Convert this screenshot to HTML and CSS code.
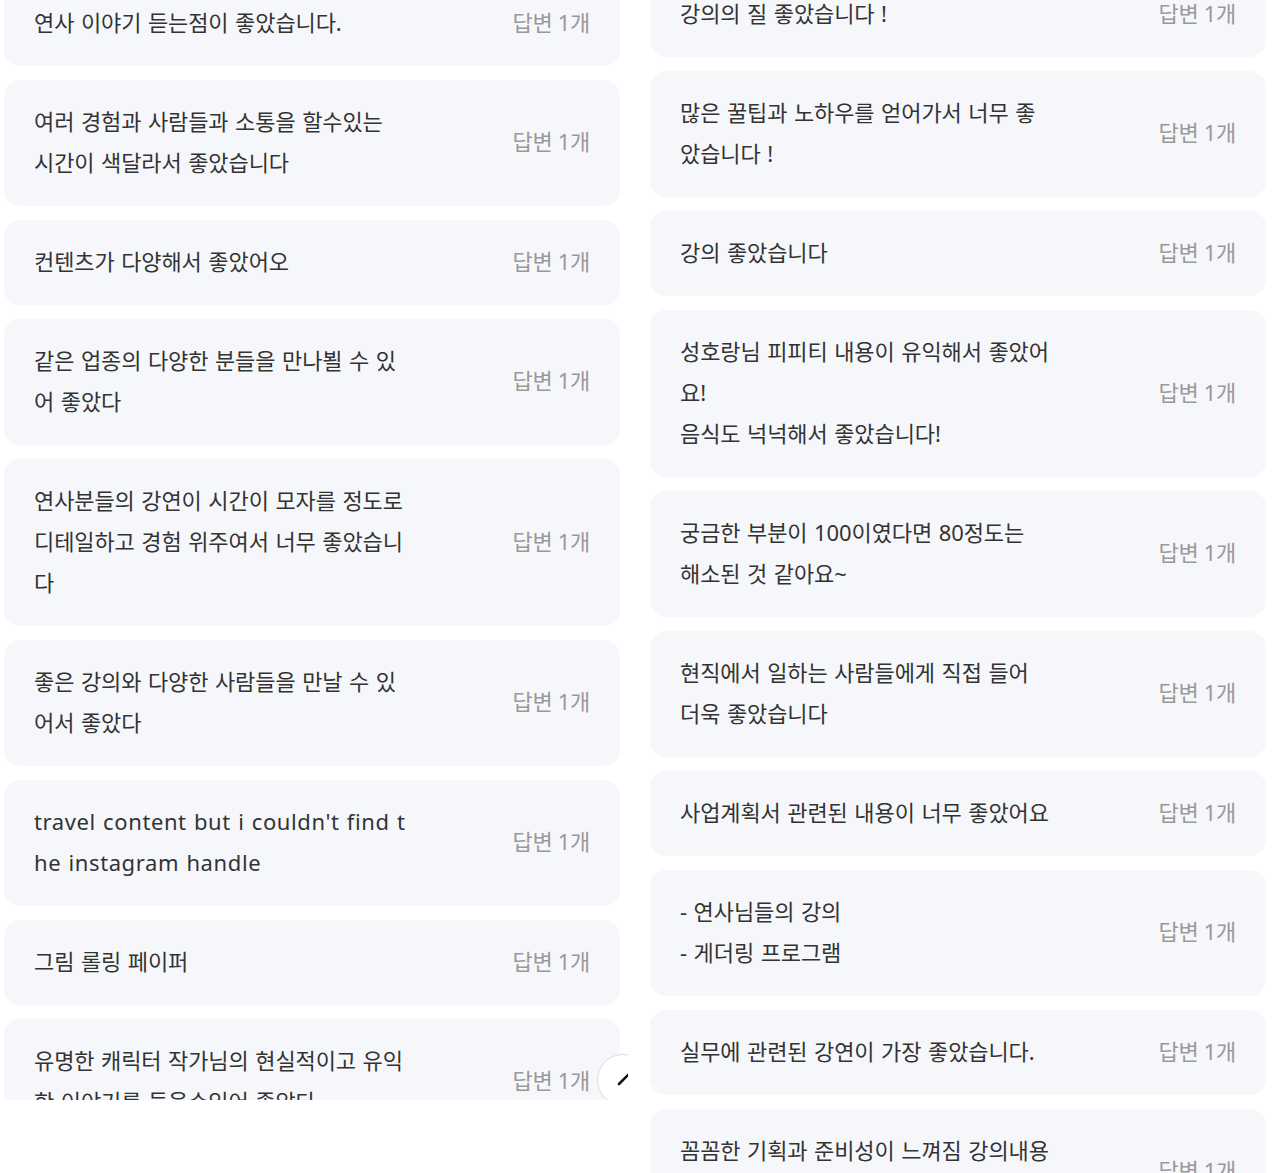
FILE: index.html
```html
<!DOCTYPE html>
<html lang="ko">
<head>
  <meta charset="UTF-8">
  <meta name="viewport" content="width=device-width, initial-scale=1.0">
  <title>답변 목록</title>
  <link rel="stylesheet" href="styles.css">
</head>
<body>
  <div class="panel panel-left">
    <ul class="answer-list">
      <li class="card"><p class="card-text">연사 이야기 듣는점이 좋았습니다.</p><span class="reply-count">답변 1개</span></li>
      <li class="card"><p class="card-text">여러 경험과 사람들과 소통을 할수있는<br>시간이 색달라서 좋았습니다</p><span class="reply-count">답변 1개</span></li>
      <li class="card"><p class="card-text">컨텐츠가 다양해서 좋았어오</p><span class="reply-count">답변 1개</span></li>
      <li class="card"><p class="card-text">같은 업종의 다양한 분들을 만나뵐 수 있<br>어 좋았다</p><span class="reply-count">답변 1개</span></li>
      <li class="card"><p class="card-text">연사분들의 강연이 시간이 모자를 정도로<br>디테일하고 경험 위주여서 너무 좋았습니<br>다</p><span class="reply-count">답변 1개</span></li>
      <li class="card"><p class="card-text">좋은 강의와 다양한 사람들을 만날 수 있<br>어서 좋았다</p><span class="reply-count">답변 1개</span></li>
      <li class="card"><p class="card-text latin">travel content but i couldn't find t<br>he instagram handle</p><span class="reply-count">답변 1개</span></li>
      <li class="card"><p class="card-text">그림 롤링 페이퍼</p><span class="reply-count">답변 1개</span></li>
      <li class="card"><p class="card-text">유명한 캐릭터 작가님의 현실적이고 유익<br>한 이야기를 들을수있어 좋았다</p><span class="reply-count">답변 1개</span></li>
    </ul>
    <button class="fab" type="button" aria-label="글쓰기">
      <svg width="52" height="52" viewBox="0 0 52 52">
        <line x1="22" y1="30" x2="34" y2="18" stroke="#111" stroke-width="2.6" stroke-linecap="round"/>
      </svg>
    </button>
  </div>

  <div class="panel panel-right">
    <ul class="answer-list">
      <li class="card"><p class="card-text">강의의 질 좋았습니다 !</p><span class="reply-count">답변 1개</span></li>
      <li class="card"><p class="card-text">많은 꿀팁과 노하우를 얻어가서 너무 좋<br>았습니다 !</p><span class="reply-count">답변 1개</span></li>
      <li class="card"><p class="card-text">강의 좋았습니다</p><span class="reply-count">답변 1개</span></li>
      <li class="card"><p class="card-text">성호랑님 피피티 내용이 유익해서 좋았어<br>요!<br>음식도 넉넉해서 좋았습니다!</p><span class="reply-count">답변 1개</span></li>
      <li class="card"><p class="card-text">궁금한 부분이 100이였다면 80정도는<br>해소된 것 같아요~</p><span class="reply-count">답변 1개</span></li>
      <li class="card"><p class="card-text">현직에서 일하는 사람들에게 직접 들어<br>더욱 좋았습니다</p><span class="reply-count">답변 1개</span></li>
      <li class="card"><p class="card-text">사업계획서 관련된 내용이 너무 좋았어요</p><span class="reply-count">답변 1개</span></li>
      <li class="card"><p class="card-text">- 연사님들의 강의<br>- 게더링 프로그램</p><span class="reply-count">답변 1개</span></li>
      <li class="card"><p class="card-text">실무에 관련된 강연이 가장 좋았습니다.</p><span class="reply-count">답변 1개</span></li>
      <li class="card"><p class="card-text">꼼꼼한 기획과 준비성이 느껴짐 강의내용<br>&nbsp;</p><span class="reply-count">답변 1개</span></li>
    </ul>
  </div>
</body>
</html>
```

FILE: styles.css
```css
* {
  margin: 0;
  padding: 0;
  box-sizing: border-box;
}

body {
  display: flex;
  align-items: flex-start;
  background: #fff;
  font-family: "Noto Sans", "Noto Sans CJK KR", sans-serif;
  color: #333;
}

.panel {
  position: relative;
  overflow: hidden;
}

.panel-left {
  width: 628px;
  height: 1100px;
  padding-left: 4px;
}

.panel-right {
  width: 652px;
  height: 1173px;
  padding-left: 22px;
}

.answer-list {
  list-style: none;
  display: flex;
  flex-direction: column;
  gap: 14px;
}

.panel-left .answer-list {
  margin-top: -19px;
}

.panel-right .answer-list {
  margin-top: -28px;
}

.card {
  width: 616px;
  display: flex;
  align-items: center;
  justify-content: space-between;
  padding: 21px 30px 23px;
  background: #f6f7fa;
  border-radius: 16px;
}

.card-text {
  font-size: 22px;
  line-height: 41px;
  letter-spacing: -0.1px;
  word-spacing: 1px;
  white-space: nowrap;
  color: #333;
}

.card-text.latin {
  letter-spacing: 0.6px;
}

.reply-count {
  flex-shrink: 0;
  margin-bottom: 4px;
  font-size: 22px;
  letter-spacing: -0.3px;
  color: #999;
}

.fab {
  position: absolute;
  left: 597px;
  top: 1054px;
  width: 52px;
  height: 52px;
  border-radius: 50%;
  border: 1px solid #dcdcdc;
  background: #fff;
  cursor: pointer;
}

.fab svg {
  display: block;
  margin: -1px;
}
```
